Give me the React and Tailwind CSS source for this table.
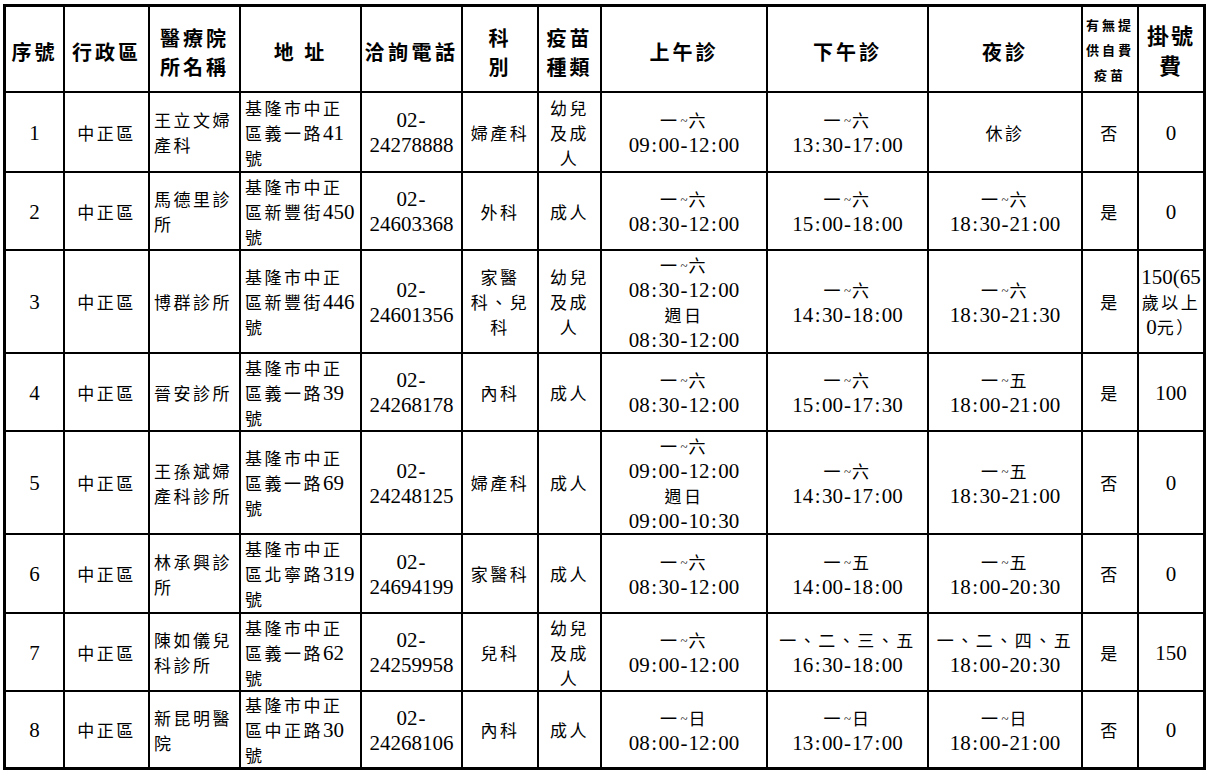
import React from 'react';
import clsx from 'clsx';

const rows = [
  { no: '1', name: ['王立文婦', '產科'], addr: ['基隆市中正', '區義一路41', '號'], tel: '24278888', dept: ['婦產科'], vac: ['幼兒', '及成', '人'], am: ['一~六', '09:00-12:00'], pm: ['一~六', '13:30-17:00'], night: ['休診'], self: '否', fee: ['0'] },
  { no: '2', name: ['馬德里診', '所'], addr: ['基隆市中正', '區新豐街450', '號'], tel: '24603368', dept: ['外科'], vac: ['成人'], am: ['一~六', '08:30-12:00'], pm: ['一~六', '15:00-18:00'], night: ['一~六', '18:30-21:00'], self: '是', fee: ['0'] },
  { no: '3', name: ['博群診所'], addr: ['基隆市中正', '區新豐街446', '號'], tel: '24601356', dept: ['家醫', '科、兒', '科'], vac: ['幼兒', '及成', '人'], am: ['一~六', '08:30-12:00', '週日', '08:30-12:00'], pm: ['一~六', '14:30-18:00'], night: ['一~六', '18:30-21:30'], self: '是', fee: ['150(65', '歲以上', '0元）'] },
  { no: '4', name: ['晉安診所'], addr: ['基隆市中正', '區義一路39', '號'], tel: '24268178', dept: ['內科'], vac: ['成人'], am: ['一~六', '08:30-12:00'], pm: ['一~六', '15:00-17:30'], night: ['一~五', '18:00-21:00'], self: '是', fee: ['100'] },
  { no: '5', name: ['王孫斌婦', '產科診所'], addr: ['基隆市中正', '區義一路69', '號'], tel: '24248125', dept: ['婦產科'], vac: ['成人'], am: ['一~六', '09:00-12:00', '週日', '09:00-10:30'], pm: ['一~六', '14:30-17:00'], night: ['一~五', '18:30-21:00'], self: '否', fee: ['0'] },
  { no: '6', name: ['林承興診', '所'], addr: ['基隆市中正', '區北寧路319', '號'], tel: '24694199', dept: ['家醫科'], vac: ['成人'], am: ['一~六', '08:30-12:00'], pm: ['一~五', '14:00-18:00'], night: ['一~五', '18:00-20:30'], self: '否', fee: ['0'] },
  { no: '7', name: ['陳如儀兒', '科診所'], addr: ['基隆市中正', '區義一路62', '號'], tel: '24259958', dept: ['兒科'], vac: ['幼兒', '及成', '人'], am: ['一~六', '09:00-12:00'], pm: ['一、二、三、五', '16:30-18:00'], night: ['一、二、四、五', '18:00-20:30'], self: '是', fee: ['150'] },
  { no: '8', name: ['新昆明醫', '院'], addr: ['基隆市中正', '區中正路30', '號'], tel: '24268106', dept: ['內科'], vac: ['成人'], am: ['一~日', '08:00-12:00'], pm: ['一~日', '13:00-17:00'], night: ['一~日', '18:00-21:00'], self: '否', fee: ['0'] },
];

const serif = "font-['Liberation_Serif',serif] text-[21px] leading-[1] tracking-normal";

// latin runs in a serif face, CJK falls through to Noto
const Txt = ({ s }) => {
  const parts = s.match(/~|:|-|[\x20-\x2c\x2e-\x39\x3b-\x7d]+|[^\x20-\x7e]+/g) || [];
  return parts.map((p, i) => {
    if (p === '~') return <span key={i} className="font-['Liberation_Serif',serif] text-[13px] leading-[1] tracking-normal px-[1px] relative -top-[2px]">~</span>;
    if (p === ':') return <span key={i} className={clsx(serif, 'px-[1.5px]')}>:</span>;
    if (p === '-') return <span key={i} className={clsx(serif, 'px-[1px]')}>-</span>;
    if (/^[\x20-\x7d]+$/.test(p)) return <span key={i} className={serif}>{p}</span>;
    return <span key={i}>{p}</span>;
  });
};

const Cell = ({ lines, left }) => (
  <div className={clsx('bg-white flex flex-col justify-center overflow-hidden', left ? 'items-start pl-[4px]' : 'items-center')}>
    {lines.map((l, i) => (
      <div key={i} className="whitespace-nowrap h-[25px]">
        <Txt s={l} />
      </div>
    ))}
  </div>
);

const Head = ({ lines, className }) => (
  <div className={clsx('bg-white flex flex-col items-center justify-center font-bold overflow-hidden', className || 'text-[20px] tracking-[3px] leading-[29px] pt-[5px]')}>
    {lines.map((l, i) => (
      <div key={i} className="whitespace-nowrap">{l}</div>
    ))}
  </div>
);

export default function App() {
  return (
    <div className="w-[1208px] h-[770px] bg-white overflow-hidden text-black font-['Noto_Sans_CJK_TC',sans-serif]">
      <div className="ml-[3px] mt-[4px] w-[1203px] bg-black p-[3px] grid gap-[2px] grid-cols-[57px_83px_89px_119px_99px_74px_61px_164px_159px_152px_54px_64px] grid-rows-[84px_78px_76px_101px_76px_101px_77px_76px_75px] text-[17px] tracking-[2.5px] leading-[25px]">
        <Head lines={['序號']} />
        <Head lines={['行政區']} />
        <Head lines={['醫療院', '所名稱']} />
        <Head lines={['地 址']} />
        <Head lines={['洽詢電話']} className="text-[20px] tracking-[3.5px] leading-[29px] pt-[5px]" />
        <Head lines={['科', '別']} />
        <Head lines={['疫苗', '種類']} />
        <Head lines={['上午診']} />
        <Head lines={['下午診']} />
        <Head lines={['夜診']} />
        <Head lines={['有無提', '供自費', '疫苗']} className="text-[13px] tracking-[3px] leading-[25px]" />
        <Head lines={['掛號', '費']} className="text-[22px] tracking-[2px] leading-[30px]" />

        {rows.map((r) => (
          <React.Fragment key={r.no}>
            <Cell lines={[r.no]} />
            <Cell lines={['中正區']} />
            <Cell lines={r.name} left />
            <Cell lines={r.addr} left />
            <Cell lines={['02-', r.tel]} />
            <Cell lines={r.dept} />
            <Cell lines={r.vac} />
            <Cell lines={r.am} />
            <Cell lines={r.pm} />
            <Cell lines={r.night} />
            <Cell lines={[r.self]} />
            <Cell lines={r.fee} />
          </React.Fragment>
        ))}
      </div>
    </div>
  );
}
